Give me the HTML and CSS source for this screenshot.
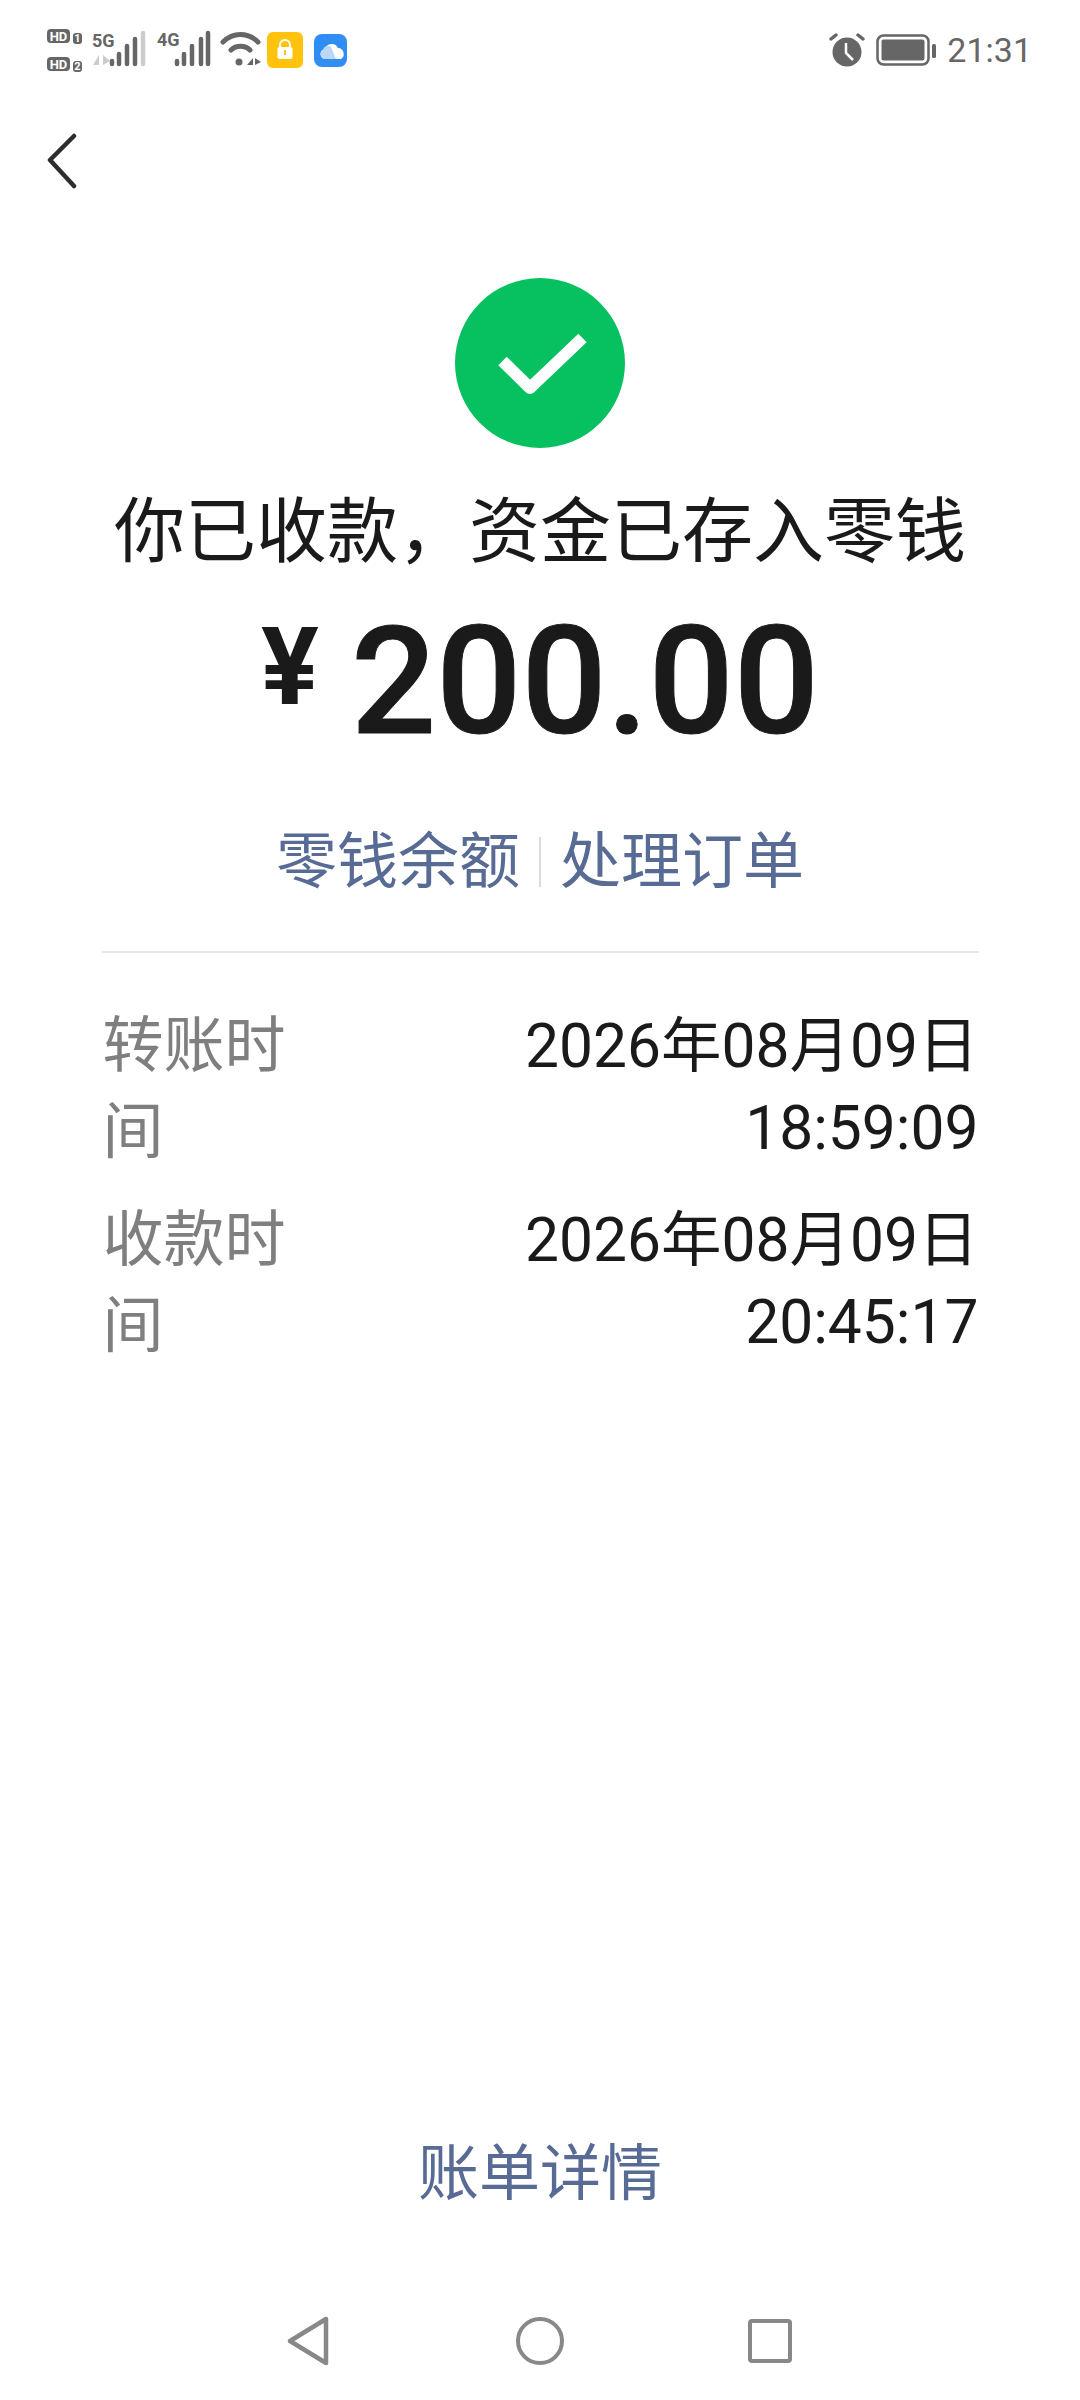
FILE: index.html
```html
<!DOCTYPE html>
<html lang="zh">
<head>
<meta charset="utf-8">
<title>收款</title>
<link rel="stylesheet" href="styles.css">
</head>
<body>
<div class="page">
  <header class="status">
    <svg class="status-left" width="320" height="60" viewBox="40 20 320 60">
      <g class="hd">
        <rect x="47" y="29" width="23" height="14" rx="4"/><text x="58.5" y="40.5" class="hd-t">HD</text>
        <rect x="73" y="33" width="9" height="11" rx="3"/><text x="77.5" y="42" class="hd-n">1</text>
        <rect x="47" y="57" width="23" height="14" rx="4"/><text x="58.5" y="68.5" class="hd-t">HD</text>
        <rect x="73" y="61" width="9" height="11" rx="3"/><text x="77.5" y="70" class="hd-n">2</text>
      </g>
      <text x="92" y="47" class="net">5G</text>
      <path class="bars" d="M112 64v-3M119 64v-10M127 64v-18M135 64v-25"/>
      <path class="bar-off" d="M143 64v-31"/>
      <path class="arrows-off" d="M99 55v10h-6zM103 55l7 6-7 4z"/>
      <text x="157" y="46" class="net">4G</text>
      <path class="bars" d="M177 64v-3M184 64v-10M192 64v-18M201 64v-25M208 64v-31"/>
      <path class="wifi" d="M223 42c10-10 25-10 35 0M231 50c5-5 14-5 19 0"/>
      <circle cx="239" cy="62" r="3.5" class="fill"/>
      <path class="fill" d="M247 65l6-7v7zM255 58l6 4-6 3z"/>
      <rect x="267" y="32" width="36" height="36" rx="6" fill="#ffc30d"/>
      <rect x="277.5" y="47" width="15" height="12" rx="2" fill="#fff"/>
      <path d="M280 47v-2a5 5 0 0 1 10 0v2" fill="none" stroke="#fff" stroke-width="2"/>
      <rect x="284" y="50" width="2" height="5" fill="#ffc30d"/>
      <rect x="314" y="34" width="33" height="33" rx="8" fill="#2f8df4"/>
      <path d="M326 59a5 5 0 0 1-1-10 7 7 0 0 1 13-1 6 6 0 0 1 3 11z" fill="#fff"/>
      <path d="M324 59a5 5 0 0 1-1-9 5 5 0 0 1 8-3l5 12z" fill="#bcd6f6"/>
    </svg>
    <div class="status-right">
      <svg width="36" height="36" viewBox="0 0 36 36">
        <circle cx="18" cy="20" r="14.5" fill="#666"/>
        <path d="M2 7l5-4M34 7l-5-4" stroke="#666" stroke-width="3.5" stroke-linecap="round" fill="none"/>
        <path d="M17 11v10l7 7" stroke="#fff" stroke-width="2.5" fill="none"/>
      </svg>
      <svg width="61" height="32" viewBox="0 0 61 32">
        <rect x="1.5" y="1.5" width="51" height="29" rx="6" fill="none" stroke="#666" stroke-width="2.5"/>
        <rect x="5.5" y="5.5" width="43" height="21" rx="2" fill="#666"/>
        <rect x="56" y="10" width="4" height="14" rx="1.5" fill="#666"/>
      </svg>
      <span class="clock">21:31</span>
    </div>
  </header>

  <nav class="topnav">
    <svg class="back" width="30" height="56" viewBox="0 0 30 56">
      <path d="M27 3L3 27l24 26" fill="none" stroke="#2d2d2d" stroke-width="4.5" stroke-linecap="round" stroke-linejoin="round"/>
    </svg>
  </nav>

  <main class="result">
    <svg class="ok" width="170" height="170" viewBox="0 0 170 170">
      <circle cx="85" cy="85" r="85" fill="#07c160"/>
      <path d="M47.5 83L75 110l52.5-50" fill="none" stroke="#fff" stroke-width="12" stroke-linejoin="round"/>
    </svg>
    <h1 class="title">你已收款&#xFF0C;资金已存入零钱</h1>
    <div class="amount"><span class="yen">¥</span><span class="sum">200.00</span></div>
    <div class="links">
      <a class="link">零钱余额</a>
      <span class="sep"></span>
      <a class="link">处理订单</a>
    </div>
    <div class="rule"></div>
    <dl class="rows">
      <div class="row">
        <dt>转账时间</dt>
        <dd>2026年08月09日 18:59:09</dd>
      </div>
      <div class="row">
        <dt>收款时间</dt>
        <dd>2026年08月09日 20:45:17</dd>
      </div>
    </dl>
  </main>

  <div class="bill"><a class="link">账单详情</a></div>

  <footer class="navbar">
    <svg width="46" height="52" viewBox="0 0 46 52"><path d="M40 4L4 26l36 22z" fill="none" stroke="#888" stroke-width="4.5" stroke-linejoin="round"/></svg>
    <svg width="48" height="48" viewBox="0 0 48 48"><circle cx="24" cy="24" r="22" fill="none" stroke="#888" stroke-width="4"/></svg>
    <svg width="44" height="44" viewBox="0 0 44 44"><rect x="2" y="2" width="40" height="40" rx="2" fill="none" stroke="#888" stroke-width="4"/></svg>
  </footer>
</div>
</body>
</html>
```
FILE: styles.css
```css
* { box-sizing: border-box; margin: 0; padding: 0; }
html, body { width: 1080px; height: 2400px; background: #fff; }
body {
  font-family: Roboto, "Noto Sans CJK SC", sans-serif;
  color: #1a1a1a;
  overflow: hidden;
}
.page { width: 1080px; height: 2400px; display: flex; flex-direction: column; }

.status {
  height: 100px;
  padding: 20px 48px 0 40px;
  display: flex;
  justify-content: space-between;
  align-items: flex-start;
}
.status-right { display: flex; align-items: center; height: 60px; }
.status-right svg:first-child { margin-right: 11px; }
.clock { font-size: 34px; color: #666; margin-left: 10px; line-height: 60px; }
.hd rect { fill: #666; }
.hd-t { fill: #fff; font: 700 13px Roboto, sans-serif; text-anchor: middle; }
.hd-n { fill: #fff; font: 700 11px Roboto, sans-serif; text-anchor: middle; }
.net { fill: #666; font: 700 18px "Liberation Sans Narrow", Roboto, sans-serif; }
.bars { stroke: #666; stroke-width: 4.5; stroke-linecap: round; fill: none; }
.bar-off { stroke: #ccc; stroke-width: 4.5; stroke-linecap: round; fill: none; }
.arrows-off { fill: #ccc; }
.wifi { stroke: #666; stroke-width: 5; fill: none; stroke-linecap: round; }
.fill { fill: #666; }

.topnav { height: 178px; padding: 33px 0 0 47px; }
.back { display: block; }

.result { display: flex; flex-direction: column; align-items: center; }
.ok { display: block; }
.title { font-size: 71px; font-weight: 400; line-height: 84px; margin-top: 42px; color: #1a1a1a; }
.amount { display: flex; align-items: flex-start; margin-top: 28px; height: 160px; color: #1a1a1a; }
.yen { font-size: 108px; font-weight: 700; margin-right: 32px; line-height: 130px; }
.sum { font-size: 150px; font-weight: 500; line-height: 160px; -webkit-text-stroke: 1px #1a1a1a; }
.links { display: flex; align-items: center; margin-top: 58px; }
.link { font-size: 61px; line-height: 84px; color: #576b95; }
.sep { width: 2px; height: 50px; background: #dcdcdc; margin: 0 19px; }
.rule { width: 877px; height: 2px; background: #e6e6e6; margin-top: 47px; }
.rows { width: 877px; margin-top: 50px; display: flex; flex-direction: column; gap: 22px; }
.row { display: flex; justify-content: space-between; font-size: 61px; line-height: 86px; }
.row dt { width: 185px; color: #7f7f7f; padding-left: 1px; }
.row dd { width: 470px; text-align: right; color: #1a1a1a; font-size: 60.5px; line-height: 82px; padding-top: 3px; }

.bill { margin-top: auto; display: flex; justify-content: center; margin-bottom: 66px; }
.navbar {
  height: 118px;
  padding: 0 288px 0 286px;
  display: flex;
  justify-content: space-between;
  align-items: center;
}
```
